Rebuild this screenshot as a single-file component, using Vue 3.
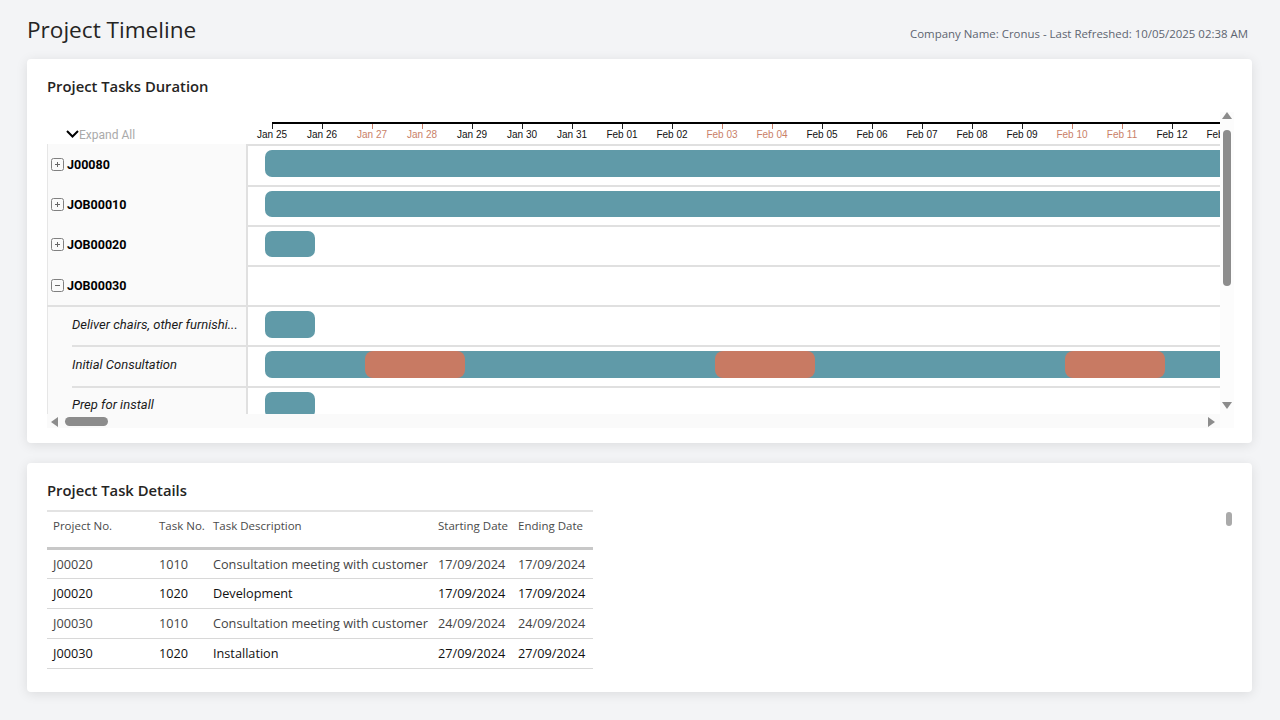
<template>
  <div class="page">
    <header class="page-head">
      <h1 class="page-title">Project Timeline</h1>
      <span class="page-meta">Company Name: Cronus - Last Refreshed: 10/05/2025 02:38 AM</span>
    </header>

    <!-- gantt -->
    <section class="card gantt-card">
      <h2 class="card-title">Project Tasks Duration</h2>
      <div class="gantt">
        <div class="gantt-view">
          <div class="gantt-head">
            <div class="expand-all">
              <svg class="chevron" width="13" height="8" viewBox="0 0 13 8">
                <path d="M1 1l5.5 5.5L12 1" fill="none" stroke="#000" stroke-width="2" />
              </svg>
              <span>Expand All</span>
            </div>
            <div class="axis">
              <div v-for="d in days" :key="d.label" class="tick" :class="{ weekend: d.weekend }">
                <span>{{ d.label }}</span>
              </div>
            </div>
          </div>

          <div v-for="row in rows" :key="row.name" class="row" :class="{ child: row.child }">
            <div class="row-label">
              <svg v-if="!row.child" class="toggle" width="13" height="13" viewBox="0 0 13 13">
                <rect x="0.5" y="0.5" width="12" height="12" rx="2" fill="none" stroke="#808080" />
                <path v-if="row.open" d="M4 6.5h5" stroke="#666" />
                <path v-else d="M4 6.5h5M6.5 4v5" stroke="#666" />
              </svg>
              <span class="row-name">{{ row.name }}</span>
            </div>
            <div class="row-track">
              <div v-if="row.width" class="bar" :style="{ width: row.width + 'px' }">
                <div
                  v-for="off in row.offs"
                  :key="off"
                  class="bar-off"
                  :style="{ left: off + 'px' }"
                ></div>
              </div>
            </div>
          </div>
        </div>

        <div class="vscroll">
          <span class="arrow arrow-up"></span>
          <div class="vthumb"></div>
          <span class="arrow arrow-down"></span>
        </div>
        <div class="hscroll">
          <span class="arrow arrow-left"></span>
          <div class="hthumb"></div>
          <span class="arrow arrow-right"></span>
        </div>
        <div class="corner"></div>
      </div>
    </section>

    <!-- details table -->
    <section class="card details-card">
      <h2 class="card-title">Project Task Details</h2>
      <div class="details-body">
        <table class="details">
          <thead>
            <tr>
              <th class="col-project">Project No.</th>
              <th class="col-task">Task No.</th>
              <th class="col-desc">Task Description</th>
              <th class="col-date">Starting Date</th>
              <th class="col-end">Ending Date</th>
            </tr>
          </thead>
          <tbody>
            <tr v-for="(t, i) in tasks" :key="i" :class="{ dark: i % 2 === 1 }">
              <td>{{ t.project }}</td>
              <td>{{ t.task }}</td>
              <td>{{ t.desc }}</td>
              <td>{{ t.start }}</td>
              <td>{{ t.end }}</td>
            </tr>
          </tbody>
        </table>
        <div class="mini-thumb"></div>
      </div>
    </section>
  </div>
</template>

<script setup>
const weekendDays = ['Jan 27', 'Jan 28', 'Feb 03', 'Feb 04', 'Feb 10', 'Feb 11']
const dayLabels = [
  'Jan 25', 'Jan 26', 'Jan 27', 'Jan 28', 'Jan 29', 'Jan 30', 'Jan 31',
  'Feb 01', 'Feb 02', 'Feb 03', 'Feb 04', 'Feb 05', 'Feb 06', 'Feb 07',
  'Feb 08', 'Feb 09', 'Feb 10', 'Feb 11', 'Feb 12', 'Feb 13'
]
const days = dayLabels.map((label) => ({ label, weekend: weekendDays.includes(label) }))

const rows = [
  { name: 'J00080', width: 1400 },
  { name: 'JOB00010', width: 1400 },
  { name: 'JOB00020', width: 50 },
  { name: 'JOB00030', open: true },
  { name: 'Deliver chairs, other furnishi...', child: true, width: 50 },
  { name: 'Initial Consultation', child: true, width: 1400, offs: [100, 450, 800] },
  { name: 'Prep for install', child: true, width: 50 }
]

const tasks = [
  { project: 'J00020', task: '1010', desc: 'Consultation meeting with customer', start: '17/09/2024', end: '17/09/2024' },
  { project: 'J00020', task: '1020', desc: 'Development', start: '17/09/2024', end: '17/09/2024' },
  { project: 'J00030', task: '1010', desc: 'Consultation meeting with customer', start: '24/09/2024', end: '24/09/2024' },
  { project: 'J00030', task: '1020', desc: 'Installation', start: '27/09/2024', end: '27/09/2024' }
]
</script>

<style>
html,
body {
  background: #f3f4f6;
}
</style>

<style scoped>
.page {
  height: 720px;
  box-sizing: border-box;
  padding: 0 28px 0 27px;
  overflow: hidden;
  font-family: "Open Sans", "Noto Sans", sans-serif;
  color: #252423;
}

.page-head {
  height: 59px;
  display: flex;
  justify-content: space-between;
  align-items: flex-start;
}

.page-title {
  margin: 13px 0 0;
  font-size: 22.6px;
  line-height: 34px;
  font-weight: 400;
}

.page-meta {
  margin: 25px 4px 0 0;
  font-size: 11.45px;
  line-height: 18px;
  color: #5d6470;
}

.card {
  background: #fff;
  border-radius: 4px;
  box-shadow: 0 2px 12px rgba(0, 0, 0, 0.1);
  box-sizing: border-box;
}

.gantt-card {
  height: 384px;
  padding: 15px 18px 0 20px;
}

.details-card {
  height: 229px;
  margin-top: 20px;
  padding: 15px 20px 0;
}

.card-title {
  margin: 0;
  font-size: 14.8px;
  line-height: 24px;
  font-weight: 600;
}

/* gantt */
.gantt {
  margin-top: 14px;
  height: 316px;
  display: grid;
  grid-template-columns: 1173px 14px;
  grid-template-rows: 302px 14px;
}

.gantt-view {
  overflow: hidden;
  font-family: Roboto, sans-serif;
}

.gantt-head {
  display: flex;
  height: 32.4px;
  box-sizing: border-box;
}

.expand-all {
  width: 201px;
  flex-shrink: 0;
  box-sizing: border-box;
  padding: 14px 0 0 19px;
  display: flex;
  align-items: center;
  font-size: 12px;
  line-height: 14px;
  color: #aaa;
}

.chevron {
  margin-top: -3px;
}

.axis {
  display: flex;
  position: relative;
  margin-left: 24px;
  margin-top: 10px;
  height: 22px;
  border-top: 2px solid #000;
  margin-right: -500px;
  font-family: "Liberation Sans", Arial, sans-serif;
}

.tick {
  width: 50px;
  flex-shrink: 0;
  position: relative;
  font-size: 10px;
  color: #111;
}

.tick::before {
  content: "";
  position: absolute;
  left: 0;
  top: 0;
  width: 1px;
  height: 5px;
  background: #222;
}

.tick span {
  position: absolute;
  left: -25px;
  width: 50px;
  top: 4px;
  text-align: center;
  line-height: 13px;
}

.tick.weekend {
  color: #c97f68;
}

.tick.weekend::before {
  background: #c97f68;
}

.row {
  display: flex;
  height: 40.2px;
  box-sizing: border-box;
  position: relative;
  border-top: 2px solid #e0e0e0;
}

.row.child {
  border-top-color: transparent;
}

.row.child::before {
  content: "";
  position: absolute;
  left: 25px;
  right: 0;
  top: -2px;
  height: 2px;
  background: #e0e0e0;
}

.row:nth-child(6)::before {
  left: 0;
}

.row-label {
  width: 201px;
  flex-shrink: 0;
  box-sizing: border-box;
  display: flex;
  align-items: center;
  gap: 3px;
  padding-left: 3px;
  background: #fafafa;
  border-right: 2px solid #e0e0e0;
  border-left: 1px solid #e6e6e6;
  margin-top: -2px;
}

.toggle {
  flex-shrink: 0;
}

.row-name {
  font-size: 12.5px;
  font-weight: 700;
  color: #000;
}

.child .row-name {
  padding-left: 21px;
  margin-top: -2px;
  font-size: 13px;
  font-weight: 400;
  font-style: italic;
  color: #1a1a1a;
  white-space: nowrap;
}

.row-track {
  flex: 1;
  padding: 4px 0 0 16.7px;
  min-width: 0;
}

.bar {
  position: relative;
  height: 26.5px;
  background: #609aa8;
  border-radius: 7px;
}

.bar-off {
  position: absolute;
  top: 0;
  bottom: 0;
  width: 100px;
  background: #c87a63;
  border-radius: 8px;
}

.vscroll {
  position: relative;
  background: #fcfcfc;
}

.vthumb {
  position: absolute;
  left: 3px;
  top: 18px;
  width: 8px;
  height: 156px;
  border-radius: 4px;
  background: #8c8c8c;
}

.hscroll {
  position: relative;
  background: #fafafa;
}

.hthumb {
  position: absolute;
  left: 18px;
  top: 3px;
  width: 43px;
  height: 9px;
  border-radius: 5px;
  background: #8c8c8c;
}

.corner {
  background: #fcfcfc;
}

.arrow {
  position: absolute;
  width: 0;
  height: 0;
  border-style: solid;
  border-color: transparent;
}

.arrow-up {
  left: 2px;
  top: 0;
  border-width: 0 5px 7px;
  border-bottom-color: #8c8c8c;
}

.arrow-down {
  left: 2px;
  bottom: 5px;
  border-width: 7px 5px 0;
  border-top-color: #8c8c8c;
}

.arrow-left {
  left: 4px;
  top: 3px;
  border-width: 5px 7px 5px 0;
  border-right-color: #8c8c8c;
}

.arrow-right {
  right: 5px;
  top: 3px;
  border-width: 5px 0 5px 7px;
  border-left-color: #8c8c8c;
}

/* details */
.details-body {
  position: relative;
  margin-top: 8px;
}

.details {
  width: 546px;
  border-collapse: collapse;
  table-layout: fixed;
  font-size: 12.7px;
}

.details th {
  box-sizing: border-box;
  height: 37px;
  padding: 0 0 8px 6px;
  font-weight: 400;
  font-size: 11.5px;
  text-align: left;
  color: #4a4a4a;
  border-top: 2px solid #e3e3e3;
  border-bottom: 3px solid #c8c8c8;
}

.col-project {
  width: 106px;
}

.col-task {
  width: 54px;
}

.col-desc {
  width: 225px;
}

.col-date {
  width: 80px;
}

.col-end {
  width: 81px;
}

.details td {
  box-sizing: border-box;
  height: 30px;
  padding: 0 0 0 6px;
  color: #444;
  white-space: nowrap;
  border-bottom: 1px solid #d8d8d8;
}

.details .dark td {
  color: #111;
}

.mini-thumb {
  position: absolute;
  right: 0;
  top: 2px;
  width: 6.5px;
  height: 14px;
  border-radius: 3px;
  background: #aaa;
}
</style>
